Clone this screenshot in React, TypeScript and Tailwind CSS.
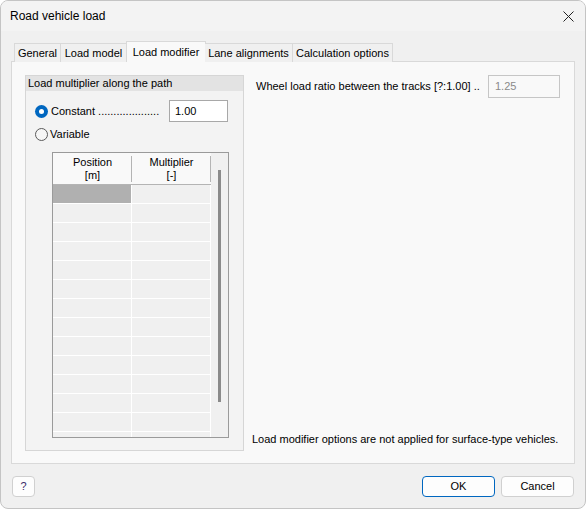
import React from 'react';

const font = { fontFamily: '"Liberation Sans", Arial, sans-serif' };

const tabs = [
  { label: 'General', w: 'w-[47px]' },
  { label: 'Load model', w: 'w-[66px]' },
  { label: 'Load modifier', w: 'w-[80px]', active: true },
  { label: 'Lane alignments', w: 'w-[88px]' },
  { label: 'Calculation options', w: 'w-[100px]' },
];

const Radio = ({ checked }: { checked?: boolean }) =>
  checked ? (
    <span className="w-[13px] h-[13px] rounded-full bg-[#0067c0] flex items-center justify-center shrink-0">
      <span className="w-[5px] h-[5px] rounded-full bg-white" />
    </span>
  ) : (
    <span className="w-[13px] h-[13px] rounded-full border border-[#5a5a5a] bg-[#f6f6f6] shrink-0" />
  );

export default function App() {
  const rows = Array.from({ length: 14 });

  return (
    <div className="w-[586px] h-[509px] bg-white whitespace-nowrap" style={font}>
      <div className="w-full h-full rounded-[8px] border border-[#c4c4c4] bg-[#f0f0f0] overflow-hidden flex flex-col text-[11px] text-black">
        {/* Title bar */}
        <div className="h-[30px] bg-[#f3f3f3] flex items-center justify-between pl-[9px] pr-[10px] shrink-0">
          <span className="text-[12px] text-black">Road vehicle load</span>
          <svg width="11" height="11" viewBox="0 0 11 11" className="mr-[1px]">
            <path d="M0.5 0.5 L10.5 10.5 M10.5 0.5 L0.5 10.5" stroke="#222" strokeWidth="1" />
          </svg>
        </div>

        {/* Tabs */}
        <div className="px-[10px] pt-[10px] shrink-0">
          <div className="flex items-end h-[21px] pl-[3px] relative z-10">
            {tabs.map((t) =>
              t.active ? (
                <div
                  key={t.label}
                  className={`${t.w} h-[21px] -mx-[1px] bg-[#f9f9f9] border border-b-0 border-[#d9d9d9] flex items-start justify-center pt-[2px]`}
                >
                  {t.label}
                </div>
              ) : (
                <div
                  key={t.label}
                  className={`${t.w} h-[19px] bg-[#f0f0f0] border border-b-0 border-l-0 first:border-l border-[#d9d9d9] flex items-center justify-center pt-[1px]`}
                >
                  {t.label}
                </div>
              )
            )}
          </div>
        </div>

        {/* Tab panel */}
        <div className="mx-[10px] -mt-[1px] h-[403px] bg-[#f9f9f9] border border-[#d9d9d9] flex pl-[13px] pt-[13px] pb-[12px] shrink-0">
          {/* Group box */}
          <div className="w-[219px] bg-[#f3f3f3] border border-[#d6d6d6] flex flex-col">
            <div className="h-[15px] bg-[#e3e3e3] flex items-center pl-[2px]">
              Load multiplier along the path
            </div>
            <div className="flex items-center pl-[9px] mt-[9px] h-[22px]">
              <Radio checked />
              <span className="ml-[3px] w-[118px] overflow-hidden">Constant ....................</span>
              <div className="w-[59px] h-[22px] bg-white border border-[#a8a8a8] flex items-center pl-[5px]">
                1.00
              </div>
            </div>
            <div className="flex items-center pl-[9px] h-[24px]">
              <Radio />
              <span className="ml-[2px]">Variable</span>
            </div>

            {/* Table */}
            <div className="ml-[26px] mt-[6px] w-[177px] h-[286px] border border-[#9a9a9a] flex overflow-hidden">
              <div className="w-[158px] flex flex-col">
                <div className="h-[32px] bg-[#f9f9f9] flex border-b border-[#b4b4b4] shrink-0">
                  <div className="w-[79px] flex flex-col items-center justify-center leading-[13px] relative">
                    <span>Position</span>
                    <span>[m]</span>
                    <span className="absolute right-0 top-[3px] bottom-[2px] w-px bg-[#b4b4b4]" />
                  </div>
                  <div className="w-[79px] flex flex-col items-center justify-center leading-[13px] relative">
                    <span>Multiplier</span>
                    <span>[-]</span>
                    <span className="absolute right-0 top-[3px] bottom-[2px] w-px bg-[#b4b4b4]" />
                  </div>
                </div>
                {rows.map((_, i) => (
                  <div key={i} className="h-[19px] flex border-b border-white shrink-0">
                    <div className={`w-[79px] border-r border-white ${i === 0 ? 'bg-[#b0b0b0]' : 'bg-[#f0f0f0]'}`} />
                    <div className="w-[79px] bg-[#f0f0f0] border-r border-white" />
                  </div>
                ))}
              </div>
              <div className="flex-1 bg-[#f0f0f0] flex justify-center pt-[17px]">
                <div className="w-[3px] h-[232px] bg-[#8a8a8a]" />
              </div>
            </div>
          </div>

          {/* Right side */}
          <div className="flex-1 flex flex-col pl-[8px] pr-[14px]">
            <div className="flex items-center h-[23px]">
              <span className="pl-[4px] w-[236px]">Wheel load ratio between the tracks [?:1.00] ..</span>
              <div className="w-[72px] h-[23px] border border-[#c6c6c6] bg-[#f9f9f9] flex items-center pl-[6px] text-[#8a8a8a]">
                1.25
              </div>
            </div>
            <div className="mt-auto mb-[4px]">
              Load modifier options are not applied for surface-type vehicles.
            </div>
          </div>
        </div>

        {/* Footer buttons */}
        <div className="flex items-center px-[11px] pt-[12px]">
          <button className="w-[23px] h-[21px] rounded-[4px] border border-[#d0d0d0] bg-[#fdfdfd] text-[#3a2a6a] text-[11px]">
            ?
          </button>
          <div className="ml-auto flex gap-[6px]">
            <button className="w-[73px] h-[21px] rounded-[4px] border border-[#0067c0] bg-[#fdfdfd]">
              OK
            </button>
            <button className="w-[73px] h-[21px] rounded-[4px] border border-[#d0d0d0] bg-[#fdfdfd]">
              Cancel
            </button>
          </div>
        </div>
      </div>
    </div>
  );
}
